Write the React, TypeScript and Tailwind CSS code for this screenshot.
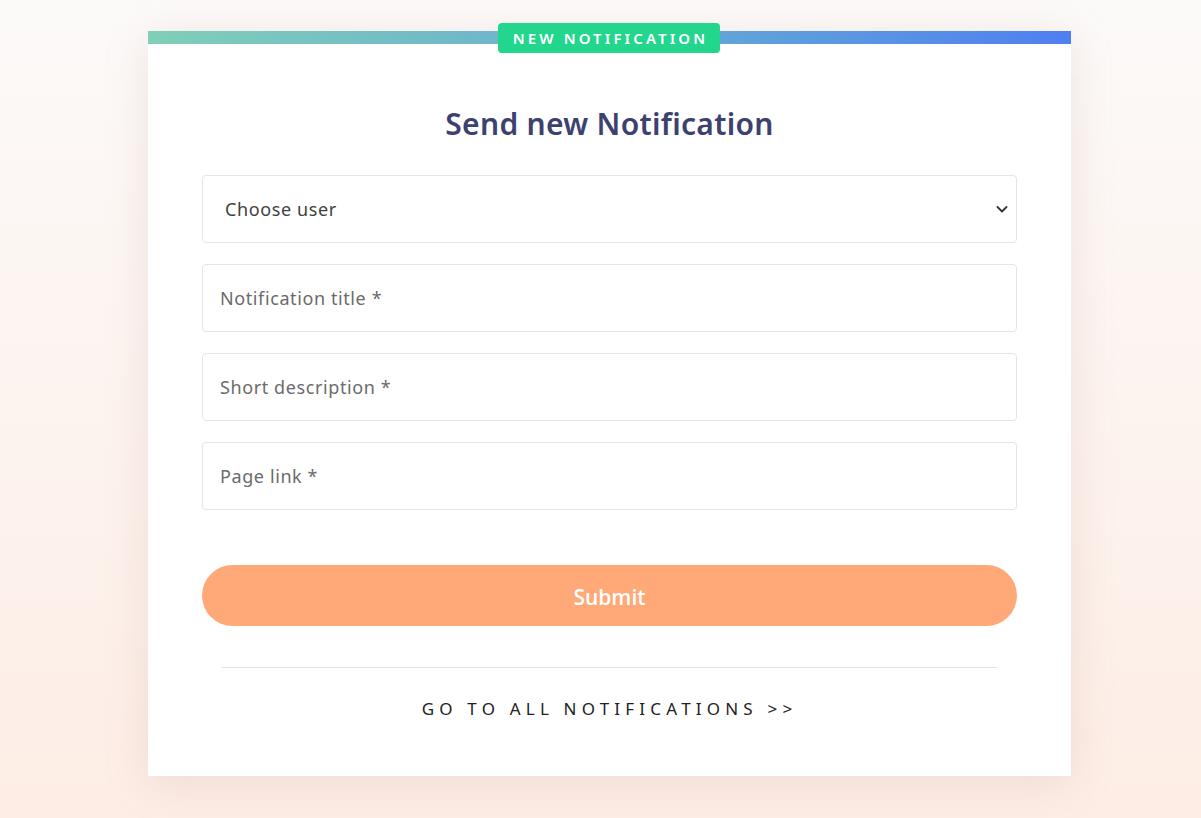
import React from 'react';

const font = { fontFamily: '"Noto Sans", "Open Sans", sans-serif' };

const Field = ({ placeholder }: { placeholder: string }) => (
  <input
    type="text"
    placeholder={placeholder}
    className="h-[68px] w-full rounded-[4px] border border-[#e4e4ee] bg-white px-[17px] text-[18px] tracking-[0.6px] text-[#444] outline-none placeholder:text-[#6b6b6b]"
  />
);

export default function App() {
  return (
    <div
      style={font}
      className="min-h-[818px] w-full bg-gradient-to-b from-[#fcfaf9] to-[#fdede5] pt-[31px]"
    >
      <div className="relative ml-[148px] w-[923px] bg-white shadow-[0_6px_40px_rgba(190,150,140,0.22)]">
        {/* gradient top bar */}
        <div className="h-[13px] w-full bg-gradient-to-r from-[#7fcfb8] via-[#6aaed0] to-[#4f7ff0]"></div>
        <div className="absolute left-[350px] top-[-8px] flex h-[30px] w-[222px] items-center justify-center rounded-[4px] bg-[#22d68e] pl-[3px] text-[15px] font-semibold tracking-[3.1px] text-white">
          NEW NOTIFICATION
        </div>

        <div className="px-[54px] pb-[54px]">
          <h1 className="mt-[58px] text-center text-[30px] leading-[44px] font-semibold tracking-[0.3px] text-[#3c4170]">
            Send new Notification
          </h1>

          <div className="mt-[29px] flex flex-col gap-[21px]">
            <div className="relative">
              <select className="h-[68px] w-full appearance-none rounded-[4px] border border-[#e4e4ee] bg-white px-[22px] text-[18px] tracking-[0.6px] text-[#3f3f3f] outline-none">
                <option>Choose user</option>
              </select>
              <svg
                className="pointer-events-none absolute right-[9px] top-[29px]"
                width="12"
                height="10"
                viewBox="0 0 12 10"
                fill="none"
              >
                <path d="M1.5 3l4.5 4.5L10.5 3" stroke="#333" strokeWidth="1.8" strokeLinecap="round" strokeLinejoin="round" />
              </svg>
            </div>
            <Field placeholder="Notification title *" />
            <Field placeholder="Short description *" />
            <Field placeholder="Page link *" />
          </div>

          <button
            style={{ fontFamily: '"Open Sans", "Noto Sans", sans-serif' }}
            className="mt-[55px] h-[61px] w-full rounded-full bg-[#ffa878] pt-[5px] text-[21px] font-semibold text-white"
          >
            Submit
          </button>

          <div className="mx-[20px] mt-[41px] border-t border-[#e2e2e2]"></div>

          <div className="mt-[28px] text-center text-[17px] tracking-[5.2px] text-[#222]">
            GO TO ALL NOTIFICATIONS &gt;&gt;
          </div>
        </div>
      </div>
    </div>
  );
}
